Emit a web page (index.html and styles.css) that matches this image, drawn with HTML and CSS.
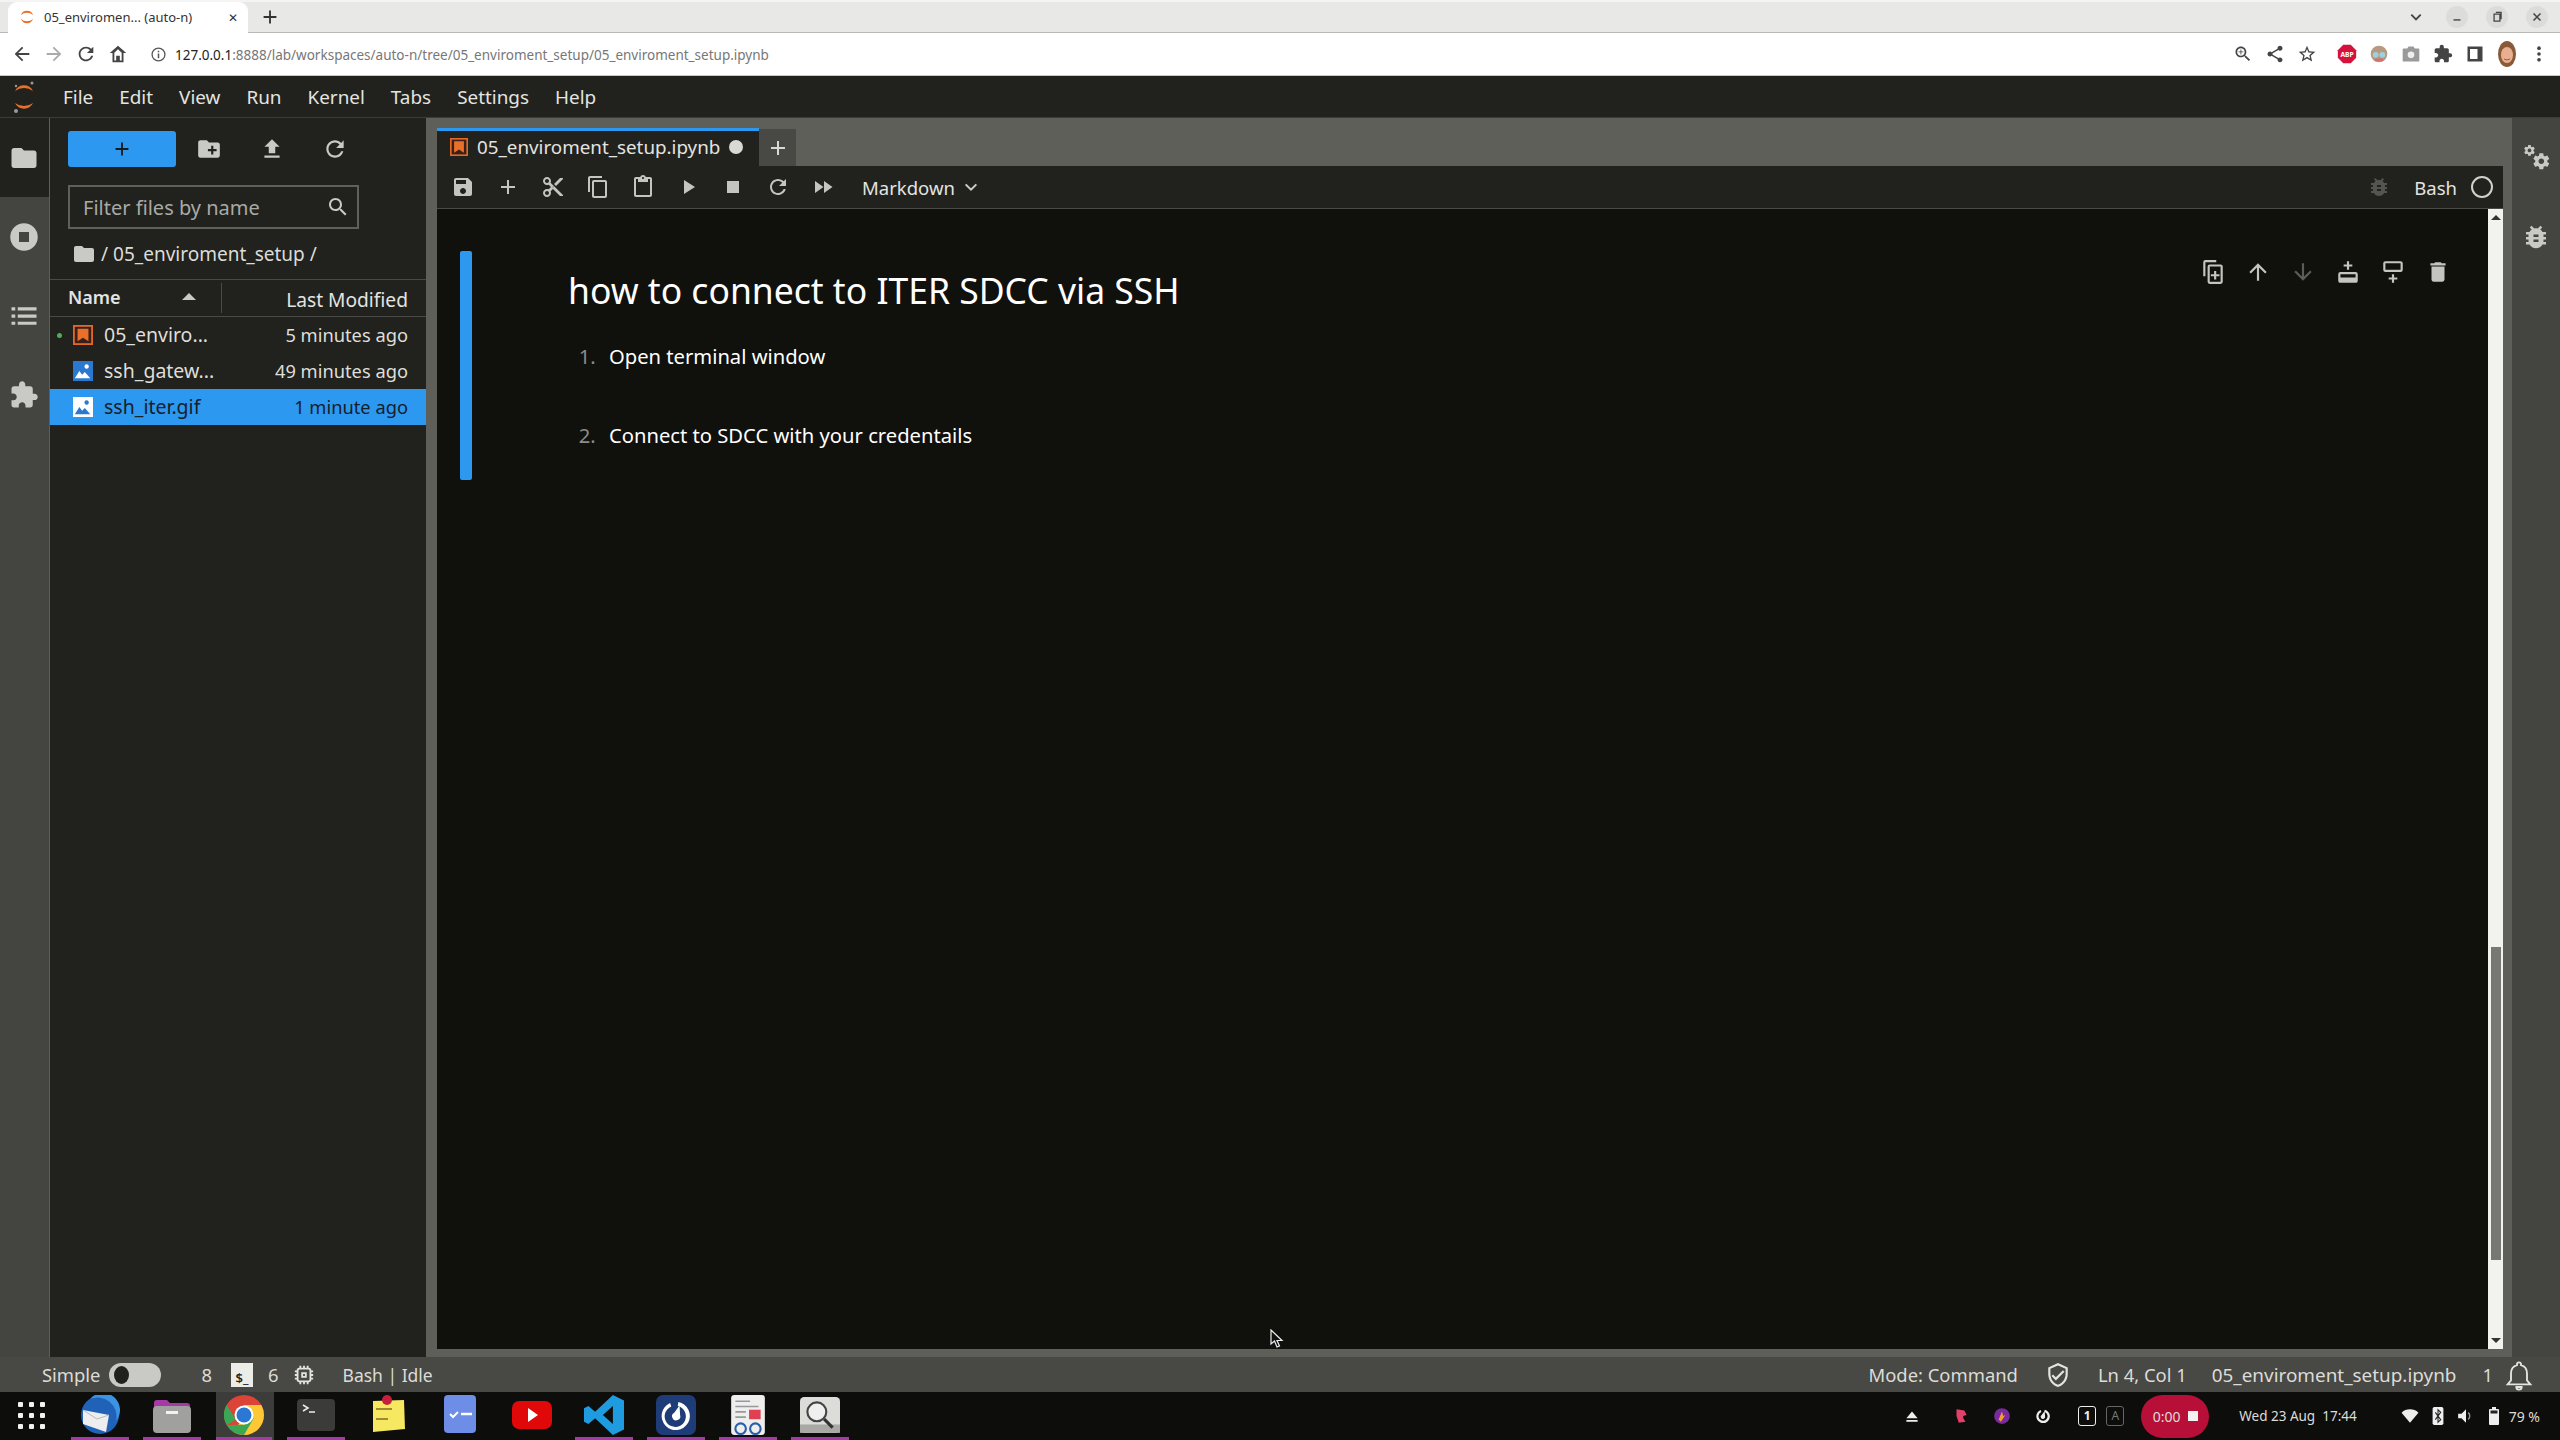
FILE: index.html
```html
<!DOCTYPE html>
<html lang="en">
<head>
  <meta charset="UTF-8">
  <title>05_enviroment_setup.ipynb (auto-n) - JupyterLab</title>
  <link rel="stylesheet" href="styles.css">
</head>
<body>
<!-- shared icons -->
<svg class="sprite" xmlns="http://www.w3.org/2000/svg">
  <symbol id="i-save" viewBox="0 0 24 24"><path d="M17 3H5c-1.11 0-2 .9-2 2v14c0 1.1.89 2 2 2h14c1.1 0 2-.9 2-2V7l-4-4zm-5 16c-1.66 0-3-1.34-3-3s1.34-3 3-3 3 1.34 3 3-1.34 3-3 3zm3-10H5V5h10v4z"/></symbol>
  <symbol id="i-add" viewBox="0 0 24 24"><path d="M19 13h-6v6h-2v-6H5v-2h6V5h2v6h6v2z"/></symbol>
  <symbol id="i-cut" viewBox="0 0 24 24"><path d="M9.64 7.64c.23-.5.36-1.05.36-1.64 0-2.21-1.79-4-4-4S2 3.79 2 6s1.79 4 4 4c.59 0 1.14-.13 1.64-.36L10 12l-2.36 2.36C7.14 14.13 6.59 14 6 14c-2.21 0-4 1.79-4 4s1.79 4 4 4 4-1.79 4-4c0-.59-.13-1.14-.36-1.64L12 14l7 7h3v-1L9.64 7.64zM6 8c-1.1 0-2-.89-2-2s.9-2 2-2 2 .89 2 2-.9 2-2 2zm0 12c-1.1 0-2-.89-2-2s.9-2 2-2 2 .89 2 2-.9 2-2 2zm6-7.5c-.28 0-.5-.22-.5-.5s.22-.5.5-.5.5.22.5.5-.22.5-.5.5zM19 3l-6 6 2 2 7-7V3z"/></symbol>
  <symbol id="i-copy" viewBox="0 0 24 24"><path d="M16 1H4c-1.1 0-2 .9-2 2v14h2V3h12V1zm3 4H8c-1.1 0-2 .9-2 2v14c0 1.1.9 2 2 2h11c1.1 0 2-.9 2-2V7c0-1.1-.9-2-2-2zm0 16H8V7h11v14z"/></symbol>
  <symbol id="i-paste" viewBox="0 0 24 24"><path d="M19 2h-4.18C14.4.84 13.3 0 12 0c-1.3 0-2.4.84-2.82 2H5c-1.1 0-2 .9-2 2v16c0 1.1.9 2 2 2h14c1.1 0 2-.9 2-2V4c0-1.1-.9-2-2-2zm-7 0c.55 0 1 .45 1 1s-.45 1-1 1-1-.45-1-1 .45-1 1-1zm7 18H5V4h2v3h10V4h2v16z"/></symbol>
  <symbol id="i-play" viewBox="0 0 24 24"><path d="M8 5v14l11-7z"/></symbol>
  <symbol id="i-stop" viewBox="0 0 24 24"><path d="M6 6h12v12H6z"/></symbol>
  <symbol id="i-refresh" viewBox="0 0 24 24"><path d="M17.65 6.35C16.2 4.9 14.21 4 12 4c-4.42 0-7.99 3.58-7.99 8s3.57 8 7.99 8c3.73 0 6.84-2.55 7.73-6h-2.08c-.82 2.33-3.04 4-5.65 4-3.31 0-6-2.69-6-6s2.69-6 6-6c1.66 0 3.14.69 4.22 1.78L13 11h7V4l-2.35 2.35z"/></symbol>
  <symbol id="i-ff" viewBox="0 0 24 24"><path d="M4 18l8.5-6L4 6v12zm9-12v12l8.5-6L13 6z"/></symbol>
  <symbol id="i-folder" viewBox="0 0 24 24"><path d="M10 4H4c-1.1 0-1.99.9-1.99 2L2 18c0 1.1.9 2 2 2h16c1.1 0 2-.9 2-2V8c0-1.1-.9-2-2-2h-8l-2-2z"/></symbol>
  <symbol id="i-newfolder" viewBox="0 0 24 24"><path d="M20 6h-8l-2-2H4c-1.11 0-1.99.89-1.99 2L2 18c0 1.11.89 2 2 2h16c1.11 0 2-.89 2-2V8c0-1.11-.89-2-2-2zm-1 8h-3v3h-2v-3h-3v-2h3V9h2v3h3v2z"/></symbol>
  <symbol id="i-upload" viewBox="0 0 24 24"><path d="M9 16h6v-6h4l-7-7-7 7h4zm-4 2h14v2H5z"/></symbol>
  <symbol id="i-search" viewBox="0 0 24 24"><path d="M15.5 14h-.79l-.28-.27C15.41 12.59 16 11.11 16 9.5 16 5.91 13.09 3 9.5 3S3 5.91 3 9.5 5.91 16 9.5 16c1.61 0 3.09-.59 4.23-1.57l.27.28v.79l5 4.99L20.49 19l-4.99-5zm-6 0C7.01 14 5 11.99 5 9.5S7.01 5 9.5 5 14 7.01 14 9.5 11.99 14 9.5 14z"/></symbol>
  <symbol id="i-puzzle" viewBox="0 0 24 24"><path d="M20.5 11H19V7c0-1.1-.9-2-2-2h-4V3.5C13 2.12 11.88 1 10.5 1S8 2.12 8 3.5V5H4c-1.1 0-1.99.9-1.99 2v3.8H3.5c1.49 0 2.7 1.21 2.7 2.7s-1.21 2.7-2.7 2.7H2V20c0 1.1.9 2 2 2h3.8v-1.5c0-1.49 1.21-2.7 2.7-2.7 1.49 0 2.7 1.21 2.7 2.7V22H17c1.1 0 2-.9 2-2v-4h1.5c1.38 0 2.5-1.12 2.5-2.5S21.88 11 20.5 11z"/></symbol>
  <symbol id="i-bug" viewBox="0 0 24 24"><path d="M20 8h-2.81c-.45-.78-1.07-1.45-1.82-1.96L17 4.41 15.59 3l-2.17 2.17C12.96 5.06 12.49 5 12 5c-.49 0-.96.06-1.41.17L8.41 3 7 4.41l1.62 1.63C7.88 6.55 7.26 7.22 6.81 8H4v2h2.09c-.05.33-.09.66-.09 1v1H4v2h2v1c0 .34.04.67.09 1H4v2h2.81c1.04 1.79 2.97 3 5.19 3s4.15-1.21 5.19-3H20v-2h-2.09c.05-.33.09-.66.09-1v-1h2v-2h-2v-1c0-.34-.04-.67-.09-1H20V8zm-6 8h-4v-2h4v2zm0-4h-4v-2h4v2z"/></symbol>
  <symbol id="i-trash" viewBox="0 0 24 24"><path d="M6 19c0 1.1.9 2 2 2h8c1.1 0 2-.9 2-2V7H6v12zM19 4h-3.5l-1-1h-5l-1 1H5v2h14V4z"/></symbol>
  <symbol id="i-up" viewBox="0 0 24 24"><path d="M4 12l1.41 1.41L11 7.83V20h2V7.83l5.58 5.59L20 12l-8-8-8 8z"/></symbol>
  <symbol id="i-down" viewBox="0 0 24 24"><path d="M20 12l-1.41-1.41L13 16.17V4h-2v12.17l-5.58-5.59L4 12l8 8 8-8z"/></symbol>
  <symbol id="i-gear" viewBox="0 0 24 24"><path d="M19.43 12.98c.04-.32.07-.64.07-.98s-.03-.66-.07-.98l2.11-1.65c.19-.15.24-.42.12-.64l-2-3.46c-.12-.22-.39-.3-.61-.22l-2.49 1c-.52-.4-1.08-.73-1.69-.98l-.38-2.65C14.46 2.18 14.25 2 14 2h-4c-.25 0-.46.18-.49.42l-.38 2.65c-.61.25-1.17.59-1.69.98l-2.49-1c-.23-.09-.49 0-.61.22l-2 3.46c-.13.22-.07.49.12.64l2.11 1.65c-.04.32-.07.65-.07.98s.03.66.07.98l-2.11 1.65c-.19.15-.24.42-.12.64l2 3.46c.12.22.39.3.61.22l2.49-1c.52.4 1.08.73 1.69.98l.38 2.65c.03.24.24.42.49.42h4c.25 0 .46-.18.49-.42l.38-2.65c.61-.25 1.17-.59 1.69-.98l2.49 1c.23.09.49 0 .61-.22l2-3.46c.12-.22.07-.49-.12-.64l-2.11-1.65zM12 15.5c-1.93 0-3.5-1.57-3.5-3.5s1.57-3.5 3.5-3.5 3.5 1.57 3.5 3.5-1.57 3.5-3.5 3.5z"/></symbol>
  <symbol id="i-notebook" viewBox="0 0 22 22"><rect x="1" y="1" width="20" height="20" fill="#3a2018" stroke="#e0692a" stroke-width="2"/><path d="M5 4h12v14l-6-4-6 4z" fill="#e8702a"/></symbol>
  <symbol id="i-image" viewBox="0 0 22 22"><rect width="22" height="22" fill="#2a78d0"/><circle cx="15" cy="6" r="2.4" fill="#fff"/><path d="M2 19l5-8 3 4 3-3 6 7z" fill="#fff"/></symbol>
  <symbol id="i-image-sel" viewBox="0 0 22 22"><rect width="22" height="22" fill="#fff"/><circle cx="15" cy="6" r="2.4" fill="#2a78d0"/><path d="M2 19l5-8 3 4 3-3 6 7z" fill="#2a78d0"/></symbol>
</svg>

<!-- browser window -->
<div class="tabstrip">
  <div class="browser-tab">
    <svg class="favicon" viewBox="0 0 16 16"><path d="M2 6a6.4 6.4 0 0 1 12 0 9 9 0 0 0-12 0zM2 10a6.4 6.4 0 0 0 12 0 9 9 0 0 1-12 0z" fill="#e8702a"/></svg>
    <span class="browser-tab-title">05_enviromen... (auto-n)</span>
    <span class="browser-tab-close">✕</span>
  </div>
  <svg class="strip-plus" viewBox="0 0 24 24"><use href="#i-add"/></svg>
  <div class="window-btns">
    <svg class="strip-chevron" viewBox="0 0 12 12"><path d="M2 4l4 4 4-4" fill="none" stroke="#444" stroke-width="1.6"/></svg>
    <span class="window-btn"><svg viewBox="0 0 12 12"><path d="M3 8.5h6" stroke="#444" stroke-width="1.2"/></svg></span>
    <span class="window-btn"><svg viewBox="0 0 12 12"><path d="M3.5 3.5h5v6h-5zM5 2h4.5v6" fill="none" stroke="#444" stroke-width="1.1"/></svg></span>
    <span class="window-btn"><svg viewBox="0 0 12 12"><path d="M3 3l6 6M9 3l-6 6" stroke="#444" stroke-width="1.3"/></svg></span>
  </div>
</div>
<div class="addressbar">
  <svg class="nav-icon" viewBox="0 0 24 24"><path d="M20 11H7.83l5.59-5.59L12 4l-8 8 8 8 1.41-1.41L7.83 13H20v-2z"/></svg>
  <svg class="nav-icon nav-off" viewBox="0 0 24 24"><path d="M12 4l-1.41 1.41L16.17 11H4v2h12.17l-5.58 5.59L12 20l8-8z"/></svg>
  <svg class="nav-icon" viewBox="0 0 24 24"><use href="#i-refresh"/></svg>
  <svg class="nav-icon" viewBox="0 0 24 24"><path d="M12 3L3 11h3v10h12V11h3zm-4 16v-8.5l4-3.6 4 3.6V19h-2v-5h-4v5z" fill-rule="evenodd"/></svg>
  <svg class="info-icon" viewBox="0 0 14 14"><circle cx="7" cy="7" r="6" fill="none" stroke="#555" stroke-width="1.2"/><path d="M6.3 6h1.4v4.5H6.3zM6.3 3.4h1.4v1.5H6.3z" fill="#555"/></svg>
  <div class="url"><span class="url-host">127.0.0.1</span>:8888/lab/workspaces/auto-n/tree/05_enviroment_setup/05_enviroment_setup.ipynb</div>
  <div class="ext-icons">
    <span class="ext"><svg viewBox="0 0 24 24"><use href="#i-search"/><path d="M9 6.500h1V9h2.500v1H10v2.500H9V10H6.500V9H9z"/></svg></span>
    <span class="ext"><svg viewBox="0 0 24 24"><path d="M18 16.100c-.8 0-1.500.3-2 .8L8.900 12.700c.1-.2.1-.5.1-.7s0-.5-.1-.7L16 7.200c.5.5 1.200.8 2 .8 1.700 0 3-1.300 3-3s-1.300-3-3-3-3 1.300-3 3c0 .2 0 .5.100.7L8 9.800C7.500 9.300 6.800 9 6 9c-1.700 0-3 1.300-3 3s1.300 3 3 3c.8 0 1.500-.3 2-.8l7.100 4.200c-.1.2-.1.4-.1.600 0 1.600 1.300 2.900 3 2.900s3-1.300 3-2.900-1.300-2.900-3-2.900z"/></svg></span>
    <span class="ext"><svg viewBox="0 0 24 24"><path d="M22 9.240l-7.190-.62L12 2 9.190 8.630 2 9.240l5.460 4.730L5.820 21 12 17.270 18.180 21l-1.630-7.030L22 9.240zM12 15.400l-3.760 2.270 1-4.280-3.320-2.880 4.380-.38L12 6.100l1.710 4.040 4.380.38-3.320 2.880 1 4.280L12 15.400z"/></svg></span>
    <span class="ext ext-gap"><svg viewBox="0 0 24 24"><path d="M7.500 1h9L23 7.500v9L16.500 23h-9L1 16.500v-9z" fill="#d6123c"/><text x="12" y="15.500" class="abp-text">ABP</text></svg></span>
    <span class="ext"><svg viewBox="0 0 24 24"><circle cx="12" cy="12" r="10" fill="#b89a80"/><circle cx="8" cy="13" r="3.500" fill="#9fd0e0"/><circle cx="16" cy="13" r="3.500" fill="#9fd0e0"/><path d="M7 19h10" stroke="#d07070" stroke-width="3"/></svg></span>
    <span class="ext"><svg viewBox="0 0 24 24"><path d="M9 3h6l1.500 2.500H21a1 1 0 0 1 1 1V20a1 1 0 0 1-1 1H3a1 1 0 0 1-1-1V6.500a1 1 0 0 1 1-1h4.500z" fill="#9a9a9a"/><circle cx="12" cy="13" r="4" fill="#eee"/></svg></span>
    <span class="ext"><svg viewBox="0 0 24 24"><use href="#i-puzzle"/></svg></span>
    <span class="ext"><svg viewBox="0 0 24 24"><path d="M3 3h18v18H3zm3 3v12h9V6z" fill-rule="evenodd"/></svg></span>
    <span class="ext"><svg class="avatar" viewBox="0 0 20 28"><ellipse cx="10" cy="14" rx="9" ry="13" fill="#8a5a38"/><ellipse cx="10" cy="15" rx="6" ry="8" fill="#e8b090"/><path d="M7 19q3 2 6 0" stroke="#c04848" fill="none"/></svg></span>
    <span class="ext"><svg viewBox="0 0 24 24"><circle cx="12" cy="5" r="2.200"/><circle cx="12" cy="12" r="2.200"/><circle cx="12" cy="19" r="2.200"/></svg></span>
  </div>
</div>

<!-- jupyterlab -->
<div class="menubar">
  <svg class="jp-logo" viewBox="0 0 24 34">
    <path d="M3 11a10 10 0 0 1 18 0 15 15 0 0 0-18 0zM3 23a10 10 0 0 0 18 0 15 15 0 0 1-18 0z" fill="#e8702a"/>
    <circle cx="20" cy="3" r="1.500" fill="#999"/><circle cx="4" cy="6" r="1.200" fill="#999"/><circle cx="4" cy="31" r="2" fill="#999"/>
  </svg>
  <span class="menu-item">File</span>
  <span class="menu-item">Edit</span>
  <span class="menu-item">View</span>
  <span class="menu-item">Run</span>
  <span class="menu-item">Kernel</span>
  <span class="menu-item">Tabs</span>
  <span class="menu-item">Settings</span>
  <span class="menu-item">Help</span>
</div>

<div class="main">
  <div class="rail">
    <div class="rail-btn rail-active"><svg class="rail-icon" viewBox="0 0 24 24"><use href="#i-folder"/></svg></div>
    <div class="rail-btn"><svg class="rail-icon" viewBox="0 0 24 24"><path d="M12 1a11 11 0 1 0 0 22 11 11 0 0 0 0-22zM8 8h8v8H8z" fill-rule="evenodd"/></svg></div>
    <div class="rail-btn"><svg class="rail-icon" viewBox="0 0 24 24"><path d="M2 5h3v2.500H2zM7 5h15v2.500H7zM2 10.800h3v2.500H2zM7 10.800h15v2.500H7zM2 16.500h3V19H2zM7 16.500h15V19H7z"/></svg></div>
    <div class="rail-btn"><svg class="rail-icon" viewBox="0 0 24 24"><use href="#i-puzzle"/></svg></div>
  </div>

  <div class="sidebar">
    <div class="fb-toolbar">
      <button class="new-btn"><svg viewBox="0 0 24 24"><use href="#i-add"/></svg></button>
      <span class="fb-tool"><svg viewBox="0 0 24 24"><use href="#i-newfolder"/></svg></span>
      <span class="fb-tool"><svg viewBox="0 0 24 24"><use href="#i-upload"/></svg></span>
      <span class="fb-tool"><svg viewBox="0 0 24 24"><use href="#i-refresh"/></svg></span>
    </div>
    <div class="filter">
      <span class="filter-text">Filter files by name</span>
      <svg viewBox="0 0 24 24"><use href="#i-search"/></svg>
    </div>
    <div class="crumbs">
      <svg viewBox="0 0 24 24"><use href="#i-folder"/></svg>
      <span>/ 05_enviroment_setup /</span>
    </div>
    <div class="fb-head">
      <div class="col-name"><b>Name</b><span class="sort-caret"></span></div>
      <div class="col-date">Last Modified</div>
    </div>
    <div class="file-row">
      <span class="run-dot on"></span>
      <svg class="file-icon" viewBox="0 0 22 22"><use href="#i-notebook"/></svg>
      <span class="file-name">05_enviro...</span>
      <span class="file-date">5 minutes ago</span>
    </div>
    <div class="file-row">
      <span class="run-dot"></span>
      <svg class="file-icon" viewBox="0 0 22 22"><use href="#i-image"/></svg>
      <span class="file-name">ssh_gatew...</span>
      <span class="file-date">49 minutes ago</span>
    </div>
    <div class="file-row file-selected">
      <span class="run-dot"></span>
      <svg class="file-icon" viewBox="0 0 22 22"><use href="#i-image-sel"/></svg>
      <span class="file-name">ssh_iter.gif</span>
      <span class="file-date">1 minute ago</span>
    </div>
  </div>

  <div class="work">
    <div class="nb-tabs">
      <div class="nb-tab">
        <svg class="nb-tab-icon" viewBox="0 0 22 22"><use href="#i-notebook"/></svg>
        <span>05_enviroment_setup.ipynb</span>
        <span class="dirty-dot"></span>
      </div>
      <div class="nb-tab-add"><svg viewBox="0 0 24 24"><use href="#i-add"/></svg></div>
    </div>
    <div class="nb-toolbar">
      <span class="nb-tool"><svg viewBox="0 0 24 24"><use href="#i-save"/></svg></span>
      <span class="nb-tool"><svg viewBox="0 0 24 24"><use href="#i-add"/></svg></span>
      <span class="nb-tool"><svg viewBox="0 0 24 24"><use href="#i-cut"/></svg></span>
      <span class="nb-tool"><svg viewBox="0 0 24 24"><use href="#i-copy"/></svg></span>
      <span class="nb-tool"><svg viewBox="0 0 24 24"><use href="#i-paste"/></svg></span>
      <span class="nb-tool"><svg viewBox="0 0 24 24"><use href="#i-play"/></svg></span>
      <span class="nb-tool"><svg viewBox="0 0 24 24"><use href="#i-stop"/></svg></span>
      <span class="nb-tool"><svg viewBox="0 0 24 24"><use href="#i-refresh"/></svg></span>
      <span class="nb-tool"><svg viewBox="0 0 24 24"><use href="#i-ff"/></svg></span>
      <span class="cell-type">Markdown</span>
      <svg class="cell-type-caret" viewBox="0 0 12 12"><path d="M2 4l4 4 4-4" fill="none" stroke="#ccc" stroke-width="1.500"/></svg>
      <svg class="tb-bug" viewBox="0 0 24 24"><use href="#i-bug"/></svg>
      <span class="kernel-name">Bash</span>
      <span class="kernel-circle"></span>
    </div>
    <div class="nb-body">
      <div class="nb-scroll">
        <div class="cell">
          <div class="collapser"></div>
          <div class="cell-md">
            <h1>how to connect to ITER SDCC via SSH</h1>
            <ol>
              <li>Open terminal window</li>
              <li>Connect to SDCC with your credentails</li>
            </ol>
          </div>
        </div>
        <div class="cell-tools">
          <span class="cell-tool"><svg viewBox="0 0 24 24"><path d="M15 1H5a2 2 0 0 0-2 2v13h2V3h10zm4 4H9a2 2 0 0 0-2 2v14a2 2 0 0 0 2 2h10a2 2 0 0 0 2-2V7a2 2 0 0 0-2-2zm0 16H9V7h10zm-6-2h2v-3h3v-2h-3v-3h-2v3h-3v2h3z"/></svg></span>
          <span class="cell-tool"><svg viewBox="0 0 24 24"><use href="#i-up"/></svg></span>
          <span class="cell-tool cell-tool-off"><svg viewBox="0 0 24 24"><use href="#i-down"/></svg></span>
          <span class="cell-tool"><svg viewBox="0 0 24 24"><path d="M11 2h2v3h3v2h-3v3h-2V7H8V5h3zM5 12h14a2 2 0 0 1 2 2v6a2 2 0 0 1-2 2H5a2 2 0 0 1-2-2v-6a2 2 0 0 1 2-2zm0 2v3h14v-3z" fill-rule="evenodd"/></svg></span>
          <span class="cell-tool"><svg viewBox="0 0 24 24"><path d="M5 2h14a2 2 0 0 1 2 2v6a2 2 0 0 1-2 2H5a2 2 0 0 1-2-2V4a2 2 0 0 1 2-2zm0 2v6h14V4zM11 14h2v3h3v2h-3v3h-2v-3H8v-2h3z" fill-rule="evenodd"/></svg></span>
          <span class="cell-tool"><svg viewBox="0 0 24 24"><use href="#i-trash"/></svg></span>
        </div>
      </div>
      <div class="scrollbar">
        <span class="sb-arrow sb-up"></span>
        <span class="sb-thumb"></span>
        <span class="sb-arrow sb-down"></span>
      </div>
    </div>
  </div>

  <div class="right-rail">
    <svg class="gears" viewBox="0 0 26 26"><use href="#i-gear" width="12" height="12" x="0" y="0"/><use href="#i-gear" width="18" height="18" x="8" y="7"/></svg>
    <svg class="right-bug" viewBox="0 0 24 24"><use href="#i-bug"/></svg>
  </div>
</div>

<div class="statusbar">
  <span class="st-simple">Simple</span>
  <span class="toggle"><span class="toggle-knob"></span></span>
  <span class="st-term-count">8</span>
  <span class="term-badge">$_</span>
  <span class="st-kernel-count">6</span>
  <svg class="chip" viewBox="0 0 24 24"><path d="M7 2h2v2h2V2h2v2h2V2h2v2a3 3 0 0 1 3 3h2v2h-2v2h2v2h-2v2h2v2h-2a3 3 0 0 1-3 3v2h-2v-2h-2v2h-2v-2H9v2H7v-2a3 3 0 0 1-3-3H2v-2h2v-2H2v-2h2V9H2V7h2a3 3 0 0 1 3-3zm0 4a1 1 0 0 0-1 1v10a1 1 0 0 0 1 1h10a1 1 0 0 0 1-1V7a1 1 0 0 0-1-1zm2 3h6v6H9zm2 2v2h2v-2z" fill-rule="evenodd"/></svg>
  <span class="st-kernel">Bash | Idle</span>
  <span class="st-mode">Mode: Command</span>
  <svg class="shield" viewBox="0 0 24 24"><path d="M12 1L3 5v6c0 5.550 3.840 10.740 9 12 5.160-1.260 9-6.450 9-12V5l-9-4zm7 10c0 4.520-2.980 8.690-7 9.930-4.020-1.240-7-5.410-7-9.930V6.300l7-3.110 7 3.110V11zm-11.590.59L6 13l4 4 8-8-1.410-1.420L10 14.170z"/></svg>
  <span class="st-pos">Ln 4, Col 1</span>
  <span class="st-file">05_enviroment_setup.ipynb</span>
  <span class="st-notif">1</span>
  <svg class="bell" viewBox="0 0 24 24"><path d="M12 2.500a1.500 1.500 0 0 1 1.500 1.500v.6C16.500 5.300 18 8 18 11v5l2.500 3h-17L6 16v-5c0-3 1.500-5.700 4.500-6.400V4A1.500 1.500 0 0 1 12 2.500zM10 21h4a2 2 0 0 1-4 0z" fill="none" stroke="#e4e4e0" stroke-width="1.400"/></svg>
</div>

<!-- desktop dock -->
<div class="dock">
  <span class="dock-grid"><i></i><i></i><i></i><i></i><i></i><i></i><i></i><i></i><i></i></span>
  <div class="dock-item running">
    <svg viewBox="0 0 40 40"><circle cx="20" cy="20" r="19" fill="#1f62b8"/><path d="M10 4a19 19 0 0 1 26 22A16 16 0 0 0 10 4z" fill="#3b93e4"/><path d="M3 15l26 5-3 17L3 29z" fill="#eeeeee"/><path d="M3 15l14 9 12-4" fill="none" stroke="#bbb"/></svg>
  </div>
  <div class="dock-item running">
    <svg viewBox="0 0 40 40"><path d="M2 8a3 3 0 0 1 3-3h10l3 3h17a3 3 0 0 1 3 3v4H2z" fill="#a53aa5"/><rect x="1" y="11" width="38" height="27" rx="4" fill="#a0a09e"/><rect x="14" y="16" width="12" height="3" fill="#f2f2f2"/></svg>
  </div>
  <div class="dock-item running dock-chrome">
    <svg viewBox="0 0 40 40"><circle cx="20" cy="20" r="20" fill="#db4437"/><path d="M20 20L2.700 30A20 20 0 0 1 2.700 10L12 25z" fill="#3aa757"/><path d="M20 20l-10 17.300A20 20 0 0 0 20 40a20 20 0 0 0 20-20 20 20 0 0 0-2.700-10H20z" fill="#fcc934"/><path d="M2.700 30A20 20 0 0 0 20 40l10-17.300-10 7z" fill="#3aa757"/><circle cx="20" cy="20" r="9.500" fill="#fff"/><circle cx="20" cy="20" r="7.500" fill="#2a78d4"/></svg>
  </div>
  <div class="dock-sep"></div>
  <div class="dock-item running dock-term">
    <svg viewBox="0 0 38 32"><rect width="38" height="32" rx="4" fill="#3b3b3a"/><path d="M6 6l5 3-5 3" fill="none" stroke="#eee" stroke-width="1.500"/><path d="M12 13h6" stroke="#eee" stroke-width="1.500"/></svg>
  </div>
  <div class="dock-item">
    <svg viewBox="0 0 40 40"><path d="M5 6l31-1 1 29-32 3z" fill="#f6e860"/><path d="M8 14h16M8 24h12" stroke="#a08a30" stroke-width="2"/><circle cx="19" cy="5" r="5" fill="#c8203c"/></svg>
  </div>
  <div class="dock-item">
    <svg viewBox="0 0 32 40"><rect width="32" height="38" rx="4" fill="#6d8de6"/><path d="M6 19l3 3 5-5" fill="none" stroke="#fff" stroke-width="2"/><path d="M17 19h11" stroke="#fff" stroke-width="2.500"/></svg>
  </div>
  <div class="dock-item">
    <svg viewBox="0 0 40 30"><rect width="40" height="28" y="1" rx="7" fill="#e00808"/><path d="M16 8l10 7-10 7z" fill="#fff"/></svg>
  </div>
  <div class="dock-item running">
    <svg viewBox="0 0 36 36"><path d="M26 0l10 5v26l-10 5-16-15-6 5-4-2V12l4-2 6 5zM26 10l-9 8 9 8z" fill="#1f9be0" fill-rule="evenodd"/></svg>
  </div>
  <div class="dock-item running">
    <svg viewBox="0 0 34 34"><rect width="34" height="34" rx="6" fill="#1e3c78"/><path d="M19 6a12 12 0 1 1-7 .800l1 3a9 9 0 1 0 5.500-.4z" fill="#fff"/><path d="M20 9l.5 8a3.500 3.500 0 1 1-5-2z" fill="#fff"/></svg>
  </div>
  <div class="dock-item running">
    <svg viewBox="0 0 32 38"><rect width="32" height="38" rx="3" fill="#eeeeee"/><path d="M4 6h14M4 11h22M4 16h10M4 21h10" stroke="#999" stroke-width="1.500"/><rect x="17" y="14" width="11" height="9" fill="#e04050"/><circle cx="9" cy="32" r="5" fill="none" stroke="#2a5ea8" stroke-width="2"/><circle cx="23" cy="32" r="5" fill="none" stroke="#2a5ea8" stroke-width="2"/></svg>
  </div>
  <div class="dock-item running">
    <svg viewBox="0 0 38 34"><rect width="38" height="34" rx="4" fill="#dcdcd8"/><rect y="26" width="38" height="8" fill="#a8a8a4"/><circle cx="16" cy="14" r="9" fill="#efefef" stroke="#444" stroke-width="2"/><path d="M23 21l8 8" stroke="#333" stroke-width="3"/></svg>
  </div>

  <div class="tray">
    <svg class="tray-icon" viewBox="0 0 16 16"><path d="M8 4l5 6H3zM3 11.500h10V13H3z" fill="#eee"/></svg>
    <svg class="tray-icon tray-app" viewBox="0 0 16 16"><path d="M4 2l7 1 2 4-3 1v2l2 3-6 1-2-6z" fill="#e0406a"/></svg>
    <svg class="tray-icon" viewBox="0 0 16 16"><circle cx="8" cy="8" r="7" fill="#7a2a9a"/><path d="M5 11l3-7 1 4 2-1-4 6z" fill="#f0a030"/></svg>
    <svg class="tray-icon" viewBox="0 0 16 16"><path d="M9.500 2.500a6 6 0 1 1-3.500.2l.5 1.800a4 4 0 1 0 2.800-.1z" fill="#eee"/><path d="M9.500 3.500l.3 4.500a2 2 0 1 1-3-1z" fill="#eee"/></svg>
    <span class="kbd-box kbd-on">1</span>
    <span class="kbd-box">A</span>
    <span class="rec-pill">0:00<i></i></span>
    <span class="clock">Wed 23 Aug&nbsp; 17:44</span>
    <svg class="tray-icon tray-wifi" viewBox="0 0 16 16"><path d="M8 14L0.500 5a11 11 0 0 1 15 0z" fill="#eee"/></svg>
    <svg class="tray-icon tray-status" viewBox="0 0 12 20"><rect width="12" height="20" rx="2" fill="#eee"/><path d="M3 6l6 8-3 3V3l3 3-6 8" fill="none" stroke="#222" stroke-width="1.200"/></svg>
    <svg class="tray-icon tray-status" viewBox="0 0 16 16"><path d="M1 6h3l4-4v12l-4-4H1z" fill="#eee"/><path d="M10 5a4 4 0 0 1 0 6" fill="none" stroke="#999" stroke-width="1.200"/></svg>
    <svg class="tray-icon tray-status" viewBox="0 0 10 18"><path d="M3 0h4v2h2a1 1 0 0 1 1 1v14a1 1 0 0 1-1 1H1a1 1 0 0 1-1-1V3a1 1 0 0 1 1-1h2z" fill="#eee"/><rect x="1.500" y="3.500" width="7" height="3" fill="#222"/></svg>
    <span class="battery">79 %</span>
  </div>
</div>

<!-- mouse pointer -->
<svg class="cursor" viewBox="0 0 14 20"><path d="M1 1v14l3.500-3 2.500 6 2.500-1-2.500-5.500H12z" fill="#111" stroke="#eee" stroke-width="1.200"/></svg>
</body>
</html>
```

FILE: styles.css
```css
html, body {
  margin: 0;
  padding: 0;
}
body {
  width: 2560px;
  height: 1440px;
  overflow: hidden;
  display: flex;
  flex-direction: column;
  position: relative;
  font-family: "Noto Sans", "Liberation Sans", sans-serif;
  color: #e4e4e0;
  background: #5f5f59;
}
.sprite { display: none; }
svg { display: block; flex: none; }

/* browser tab strip */
.tabstrip {
  height: 33px;
  flex: none;
  box-sizing: border-box;
  border-top: 2px solid #f4f4f2;
  border-bottom: 1px solid #b9b9b5;
  background: #e8e9e7;
  display: flex;
  align-items: center;
}
.browser-tab {
  width: 240px;
  height: 31px;
  margin-left: 8px;
  background: #fff;
  border-radius: 9px 9px 0 0;
  display: flex;
  align-items: center;
  box-sizing: border-box;
  padding-left: 11px;
}
.favicon { width: 16px; height: 16px; }
.browser-tab-title {
  margin-left: 9px;
  width: 178px;
  font-size: 13px;
  color: #333;
  white-space: nowrap;
  overflow: hidden;
}
.browser-tab-close { margin-left: 6px; font-size: 12px; color: #333; }
.strip-plus { width: 22px; height: 22px; margin-left: 11px; fill: #333; }
.window-btns {
  margin-left: auto;
  display: flex;
  align-items: center;
  padding-right: 3px;
}
.strip-chevron { width: 14px; height: 14px; margin-right: 14px; }
.window-btn {
  width: 22px;
  height: 22px;
  margin: 0 9px;
  border-radius: 50%;
  background: #dcdcda;
  display: flex;
  align-items: center;
  justify-content: center;
}
.window-btn svg { width: 14px; height: 14px; }

/* browser address bar */
.addressbar {
  height: 43px;
  flex: none;
  box-sizing: border-box;
  background: #fff;
  border-bottom: 1px solid #c8c8c4;
  display: flex;
  align-items: center;
  padding-left: 11px;
}
.nav-icon { width: 22px; height: 22px; margin-right: 10px; fill: #444; }
.nav-off { fill: #aaa; }
.info-icon { width: 15px; height: 15px; margin-left: 12px; }
.url {
  margin-left: 9px;
  padding-top: 1px;
  font-size: 13.5px;
  color: #777;
  white-space: nowrap;
}
.url-host { color: #222; }
.ext-icons {
  margin-left: auto;
  display: flex;
  align-items: center;
  padding-right: 5px;
}
.ext {
  width: 32px;
  display: flex;
  justify-content: center;
}
.ext svg { width: 20px; height: 20px; fill: #444; }
.ext-gap { margin-left: 8px; }
.ext svg.avatar { width: 20px; height: 28px; }
.abp-text { font-size: 8px; font-weight: 700; fill: #fff; text-anchor: middle; }

/* lab menu */
.menubar {
  height: 42px;
  flex: none;
  box-sizing: border-box;
  background: #21211d;
  border-bottom: 1px solid #3c3c38;
  display: flex;
  align-items: center;
  padding-left: 12px;
}
.jp-logo { width: 24px; height: 34px; margin-right: 14px; }
.menu-item { padding: 1px 13px 0; font-size: 18.9px; }

.main {
  flex: 1;
  min-height: 0;
  display: flex;
}

/* left icon rail */
.rail {
  width: 50px;
  flex: none;
  background: #444440;
  box-sizing: border-box;
  border-right: 1px solid #5f5f59;
}
.rail-btn {
  height: 79px;
  display: flex;
  align-items: center;
  justify-content: center;
}
.rail-active { background: #21211d; }
.rail-icon { width: 30px; height: 30px; fill: #c9c9c5; margin-left: -1px; }

/* file browser */
.sidebar {
  width: 376px;
  flex: none;
  background: #21211d;
}
.fb-toolbar {
  display: flex;
  align-items: center;
  padding: 13px 0 0 18px;
}
.new-btn {
  width: 108px;
  height: 36px;
  padding: 0;
  border: 0;
  border-radius: 3px;
  background: #2c98f0;
  display: flex;
  align-items: center;
  justify-content: center;
  margin-right: 1px;
}
.new-btn svg { width: 22px; height: 22px; fill: #1a1a18; }
.fb-tool {
  width: 63px;
  display: flex;
  justify-content: center;
}
.fb-tool svg { width: 26px; height: 26px; fill: #c9c9c5; }
.filter {
  margin: 18px 0 0 18px;
  width: 291px;
  height: 44px;
  box-sizing: border-box;
  border: 2px solid #5f5f5b;
  display: flex;
  align-items: center;
  padding: 0 7px 0 13px;
}
.filter-text { flex: 1; font-size: 20px; color: #a9a9a5; }
.filter svg { width: 24px; height: 24px; fill: #c9c9c5; }
.crumbs {
  height: 50px;
  box-sizing: border-box;
  padding-left: 22px;
  display: flex;
  align-items: center;
  font-size: 19px;
  color: #dcdcd8;
}
.crumbs svg { width: 24px; height: 24px; margin-right: 5px; fill: #c9c9c5; }
.fb-head {
  height: 38px;
  box-sizing: border-box;
  border-top: 1px solid #4a4a46;
  border-bottom: 1px solid #4a4a46;
  display: flex;
  align-items: center;
  font-size: 18px;
}
.col-name {
  width: 172px;
  box-sizing: border-box;
  padding: 0 25px 3px 18px;
  display: flex;
  align-items: center;
  justify-content: space-between;
  border-right: 1px solid #4a4a46;
  height: 30px;
}
.col-name b { font-weight: 600; }
.sort-caret {
  width: 0;
  height: 0;
  border-left: 7px solid transparent;
  border-right: 7px solid transparent;
  border-bottom: 7px solid #c9c9c5;
}
.col-date {
  flex: 1;
  text-align: right;
  padding-right: 18px;
  padding-top: 3px;
  font-size: 19.2px;
}
.file-row {
  height: 36px;
  box-sizing: border-box;
  display: flex;
  align-items: center;
  font-size: 18.3px;
  color: #dededa;
  padding: 0 18px 2px 0;
}
.run-dot {
  width: 5px;
  height: 5px;
  border-radius: 50%;
  margin: 2px 11px 0 7px;
}
.run-dot.on { background: #4caf50; }
.file-icon { width: 20px; height: 20px; margin: 2px 11px 0 0; }
.file-name { flex: 1; white-space: nowrap; font-size: 19.5px; }
.file-selected { background: #2c98f0; color: #16202a; }

/* notebook area */
.work {
  width: 2066px;
  flex: none;
  margin-left: 11px;
  display: flex;
  flex-direction: column;
}
.nb-tabs {
  height: 48px;
  flex: none;
  box-sizing: border-box;
  padding-top: 10px;
  display: flex;
}
.nb-tab {
  width: 322px;
  box-sizing: border-box;
  border-top: 3px solid #2c98f0;
  background: #21211d;
  display: flex;
  align-items: center;
  padding: 0 0 3px 13px;
  font-size: 18.8px;
}
.nb-tab-icon { width: 18px; height: 18px; margin-right: 9px; }
.dirty-dot {
  width: 14px;
  height: 14px;
  margin-left: 9px;
  border-radius: 50%;
  background: #d8d8d4;
}
.nb-tab-add {
  width: 37px;
  margin-top: 1px;
  background: #484844;
  display: flex;
  align-items: center;
  justify-content: center;
}
.nb-tab-add svg { width: 24px; height: 24px; fill: #d8d8d4; }
.nb-toolbar {
  height: 43px;
  flex: none;
  box-sizing: border-box;
  background: #21211d;
  border-bottom: 1px solid #4a4a46;
  display: flex;
  align-items: center;
  padding-left: 3px;
}
.nb-tool {
  width: 45px;
  display: flex;
  justify-content: center;
}
.nb-tool svg { width: 24px; height: 24px; fill: #c4c4c0; }
.cell-type { margin-left: 17px; font-size: 18.5px; }
.cell-type-caret { width: 16px; height: 16px; margin-left: 8px; }
.tb-bug { width: 24px; height: 24px; margin-left: auto; fill: #55554f; }
.kernel-name { margin-left: 23px; font-size: 18.5px; }
.kernel-circle {
  width: 18px;
  height: 18px;
  margin: 0 10px 0 14px;
  border: 2px solid #d0d0cc;
  border-radius: 50%;
}
.nb-body {
  height: 1140px;
  flex: none;
  display: flex;
  background: #10100d;
}
.nb-scroll {
  flex: 1;
  position: relative;
}
.cell {
  display: flex;
  padding: 42px 0 0 23px;
}
.collapser {
  width: 12px;
  height: 229px;
  border-radius: 2px;
  background: #2c98f0;
}
.cell-md {
  margin-left: 96px;
  color: #fff;
}
.cell-md h1 {
  margin: 17px 0 29px;
  font-size: 35.5px;
  font-weight: 400;
  line-height: 44px;
}
.cell-md ol {
  margin: 0;
  padding-left: 33px;
  font-size: 20.2px;
  line-height: 30px;
}
.cell-md li { margin-bottom: 49px; padding-left: 8px; }
.cell-md li::marker { color: #8c8c88; }
.cell-tools {
  position: absolute;
  top: 50px;
  right: 28px;
  display: flex;
}
.cell-tool {
  width: 45px;
  display: flex;
  justify-content: center;
}
.cell-tool svg { width: 26px; height: 26px; fill: #c4c4c0; }
.cell-tool-off svg { fill: #5c5c58; }
.scrollbar {
  width: 15px;
  flex: none;
  background: #f2f2ee;
  display: flex;
  flex-direction: column;
  align-items: center;
}
.sb-arrow {
  width: 0;
  height: 0;
  border-left: 5px solid transparent;
  border-right: 5px solid transparent;
}
.sb-up { border-bottom: 5px solid #333; margin-top: 6px; }
.sb-down { border-top: 5px solid #333; margin-top: auto; margin-bottom: 6px; }
.sb-thumb {
  width: 10px;
  height: 313px;
  margin-top: 727px;
  background: #777773;
}

/* right rail */
.right-rail {
  width: 48px;
  flex: none;
  margin-left: 9px;
  background: #444440;
  display: flex;
  flex-direction: column;
  align-items: center;
  padding-top: 26px;
  box-sizing: border-box;
  fill: #c9c9c5;
}
.gears { width: 28px; height: 28px; margin-left: 1px; }
.right-bug { width: 30px; height: 30px; margin-top: 50px; }

/* lab status bar */
.statusbar {
  height: 35px;
  flex: none;
  background: #484844;
  display: flex;
  align-items: center;
  font-size: 18.4px;
  color: #dcdcd8;
}
.st-simple { margin-left: 42px; }
.toggle {
  width: 52px;
  height: 24px;
  margin-left: 9px;
  border-radius: 12px;
  background: #c9c9c5;
  display: flex;
  align-items: center;
  padding-left: 5px;
  box-sizing: border-box;
}
.toggle-knob {
  width: 15px;
  height: 18px;
  border-radius: 50%;
  background: #21211d;
}
.st-term-count { margin-left: 40px; }
.term-badge {
  width: 22px;
  height: 24px;
  margin-left: 19px;
  background: #ecece8;
  color: #222;
  font-size: 13px;
  font-weight: 600;
  display: flex;
  align-items: flex-end;
  justify-content: center;
}
.st-kernel-count { margin-left: 15px; }
.chip { width: 22px; height: 22px; margin-left: 14px; fill: #e4e4e0; }
.st-kernel { margin-left: 28px; font-size: 17.5px; }
.st-mode { margin-left: auto; }
.shield { width: 26px; height: 26px; margin-left: 27px; fill: #e4e4e0; }
.st-pos { margin-left: 27px; }
.st-file { margin-left: 25px; font-size: 18.9px; }
.st-notif { margin-left: 26px; }
.bell { width: 32px; height: 32px; margin: 0 25px 0 10px; }

/* desktop dock */
.dock {
  height: 48px;
  flex: none;
  background: #0d0d0c;
  display: flex;
  position: relative;
}
.dock-grid {
  width: 27px;
  height: 27px;
  margin: 10px 19px 0 18px;
  display: grid;
  grid-template-columns: repeat(3, 5px);
  justify-content: space-between;
  align-content: space-between;
}
.dock-grid i { height: 5px; background: #f2f2f0; border-radius: 1px; }
.dock-item {
  width: 72px;
  height: 48px;
  box-sizing: border-box;
  border-bottom: 3px solid transparent;
  display: flex;
  align-items: center;
  justify-content: center;
  padding-top: 1px;
  background-clip: padding-box;
}
.dock-item svg { width: 40px; height: 40px; }
.dock-item.running { border-image: linear-gradient(90deg, transparent 8px, #a33aa8 8px, #a33aa8 64px, transparent 64px) 1; }
.dock-chrome { background-color: #3c3c3a; width: 56px; margin: 0 8px; }
.dock-chrome.running { border-image: none; border-bottom-color: #a33aa8; }
.dock-sep { width: 2px; height: 48px; margin-left: -8px; margin-right: 6px; background: #3c3c3a; }
.dock-term svg { width: 38px; height: 32px; }

/* tray */
.tray {
  margin-left: auto;
  display: flex;
  align-items: center;
  font-size: 14px;
  color: #dcdcd8;
  padding-right: 20px;
}
.tray-icon { width: 18px; height: 18px; margin-left: 23px; }
.tray-app { margin-left: 31px; }
.tray-wifi { margin-left: 44px; }
.tray-status { margin-left: 10px; }
.kbd-box {
  width: 16px;
  height: 18px;
  margin-left: 10px;
  border: 1.5px solid #666;
  border-radius: 3px;
  font-size: 12px;
  line-height: 18px;
  text-align: center;
  color: #777;
}
.kbd-box.kbd-on {
  margin-left: 26px;
  border-color: #eee;
  color: #eee;
  font-weight: 700;
}
.rec-pill {
  width: 68px;
  height: 43px;
  margin-left: 17px;
  border-radius: 22px;
  background: #b80f38;
  display: flex;
  align-items: center;
  justify-content: center;
  gap: 7px;
}
.rec-pill i { width: 10px; height: 10px; background: #f2f2f0; }
.clock { margin-left: 30px; font-size: 13.5px; }
.battery { margin-left: 6px; }

/* pointer sits over everything */
.cursor {
  position: absolute;
  left: 1270px;
  top: 1329px;
  width: 14px;
  height: 20px;
}
```
